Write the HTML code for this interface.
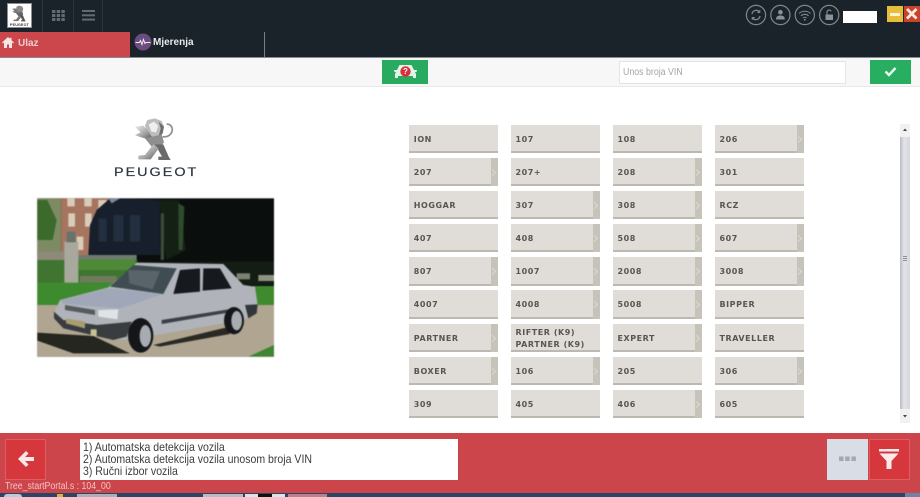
<!DOCTYPE html>
<html><head><meta charset="utf-8"><style>
*{box-sizing:border-box}
html,body{margin:0;padding:0;background:#fff}
#r{position:relative;width:920px;height:497px;overflow:hidden;background:#fff;font-family:"Liberation Sans",sans-serif;filter:blur(.25px)}
#r div,#r svg{position:absolute}
.b{width:88.5px;height:28.4px;background:#e0dcd7;border-bottom:2px solid #bdb9b1;color:#5a5552;font:bold 8px/30px "DejaVu Sans",sans-serif;letter-spacing:.55px;padding-left:4.5px;white-space:nowrap}
.a::after{content:"";position:absolute;right:0;top:0;bottom:-2px;width:7px;background:#c6c4ba}
.a::before{content:"";position:absolute;z-index:1;right:2.5px;top:12px;width:4px;height:4px;border-top:1px solid #dcdad2;border-right:1px solid #dcdad2;transform:rotate(45deg)}
.sep{width:1px;background:#2b363c}
</style></head><body><div id="r">

<div style="left:0;top:0;width:920px;height:57px;background:#1a2329"></div>
<div style="left:0;top:57px;width:920px;height:1px;background:#858b8e"></div>
<div style="left:0;top:58px;width:920px;height:28px;background:#f7f7f7"></div>
<div style="left:0;top:86px;width:920px;height:1px;background:#e9e9e9"></div>

<!-- small logo -->
<div style="left:7px;top:3px;width:25px;height:25px;background:#fff;border:1px solid #8c8f90"></div>
<svg style="left:10px;top:5px" width="19" height="17" viewBox="130 35 125 135">
<path d="M165 62L172 45L195 40L215 48L222 65L218 85L205 98L190 100L175 85Z" fill="#8a8a8a"/>
<path d="M135 65L160 62L172 74L186 96L172 102L150 96L135 90L152 82Z" fill="#777"/>
<path d="M165 100L215 88L222 112L205 132L185 125Z" fill="#666"/>
<path d="M195 118L220 118L236 155L242 165L205 165L205 155L216 155Z" fill="#555"/>
<path d="M190 118L206 130L182 163L145 163L145 152L165 150Z" fill="#777"/>
</svg>
<div style="left:8px;top:22.5px;width:23px;text-align:center;font-size:3.6px;line-height:4px;font-weight:bold;color:#333;letter-spacing:.2px">PEUGEOT</div>
<div class="sep" style="left:42px;top:0;height:32px"></div>
<div class="sep" style="left:73px;top:0;height:32px"></div>
<div class="sep" style="left:102px;top:0;height:32px"></div>
<svg style="left:52px;top:10px" width="13" height="11" viewBox="0 0 13 11" fill="#626b70"><rect width="3.4" height="3"/><rect x="4.7" width="3.4" height="3"/><rect x="9.4" width="3.4" height="3"/><rect y="4" width="3.4" height="3"/><rect x="4.7" y="4" width="3.4" height="3"/><rect x="9.4" y="4" width="3.4" height="3"/><rect y="8" width="3.4" height="3"/><rect x="4.7" y="8" width="3.4" height="3"/><rect x="9.4" y="8" width="3.4" height="3"/></svg>
<svg style="left:82px;top:10px" width="13" height="11" viewBox="0 0 13 11" fill="#626b70"><rect width="13" height="2"/><rect y="4.3" width="13" height="2"/><rect y="8.6" width="13" height="2"/></svg>

<!-- tabs -->
<div style="left:0;top:32px;width:130px;height:25px;background:#cc474c"></div>
<svg style="left:2px;top:37px" width="12" height="11" viewBox="0 0 12 11"><path d="M6 0L0 5.5l.8.9L2 5.4V11h3V7.5h2V11h3V5.4l1.2 1 .8-.9L9.5 3.2V.8H8v1z" fill="#f5e6e6"/></svg>
<div style="left:18px;top:37.5px;font-size:10px;line-height:12px;font-weight:bold;color:#eecfd0">Ulaz</div>
<svg style="left:134px;top:33px" width="18" height="18" viewBox="0 0 18 18"><circle cx="9" cy="9" r="8.5" fill="#6c4b80"/><path d="M1.5 9.5h4l1-2 1.5 4 1.5-5 1.5 4 .8-1h4.7" stroke="#eee" fill="none" stroke-width="1"/></svg>
<div style="left:153px;top:36.5px;font-size:10px;line-height:12px;font-weight:bold;color:#e8eaeb">Mjerenja</div>
<div style="left:264px;top:32px;width:1px;height:25px;background:#77807f"></div>

<!-- status icons -->
<svg style="left:744px;top:4px" width="100" height="22" viewBox="0 0 100 22" fill="none" stroke="#7f878b" stroke-width="1.2">
<circle cx="12" cy="11" r="9.6"/><circle cx="36.4" cy="11" r="9.6"/><circle cx="60.8" cy="11" r="9.6"/><circle cx="85.2" cy="11" r="9.6"/>
<path d="M8 10a4.2 4.2 0 0 1 7.5-2M16 12a4.2 4.2 0 0 1-7.5 2" stroke-width="1.3"/><path d="M15.8 6v2.5h-2.5M8.2 16v-2.5h2.5" stroke-width="1"/>
<circle cx="36.4" cy="8.2" r="2.3" fill="#8b9296" stroke="none"/><path d="M32 15.5c0-3 1.8-4 4.4-4s4.4 1 4.4 4z" fill="#8b9296" stroke="none"/>
<path d="M55 9.5c3.3-3 8.3-3 11.6 0M57 11.8c2.2-2 5.4-2 7.6 0M59 14c1-.9 2.6-.9 3.6 0" stroke-width="1.1"/><circle cx="60.8" cy="15.8" r=".9" fill="#8b9296" stroke="none"/>
<rect x="81.5" y="10.5" width="7.5" height="5.5" fill="#8b9296" stroke="none"/><path d="M83 10.5V8a2.2 2.2 0 0 1 4.2-.6"/>
</svg>
<div style="left:842.5px;top:10.5px;width:34.5px;height:12px;background:#fff"></div>
<div style="left:887px;top:6px;width:15.5px;height:15.5px;background:#e8bd3a"></div>
<div style="left:890px;top:12.5px;width:10px;height:3px;background:#fbf3d6"></div>
<div style="left:904px;top:6px;width:16px;height:15.5px;background:#c9432a"></div>
<svg style="left:904px;top:6px" width="16" height="16" viewBox="0 0 16 16"><path d="M3 3l9.5 9.5M12.5 3L3 12.5" stroke="#fbe9e2" stroke-width="2.8"/></svg>

<!-- toolbar -->
<div style="left:382px;top:59.5px;width:46px;height:24.5px;background:#28ab61"></div>
<svg style="left:392px;top:62px" width="27" height="20" viewBox="0 0 27 20"><path d="M2 8h3l2.500-5h12L22 8h3l-.5 2H23l1 2v4h-3v-2H6v2H3v-4l1-2H2.500z" fill="#e4f3ea"/><circle cx="13.5" cy="9.5" r="5.2" fill="#d8303a"/></svg>
<div style="left:395.5px;top:66.5px;width:20px;text-align:center;font-size:8px;line-height:10px;font-weight:bold;color:#fff">?</div>
<div style="left:619px;top:60.5px;width:227px;height:23px;background:#fff;border:1px solid #e4e4e4"></div>
<div style="left:623px;top:61.5px;font-size:10px;line-height:21px;color:#a5a5a5;transform:scaleX(.88);transform-origin:0 0;white-space:nowrap">Unos broja VIN</div>
<div style="left:870px;top:60px;width:40.5px;height:23.5px;background:#27ae60"></div>
<svg style="left:884px;top:66px" width="13" height="11" viewBox="0 0 13 11"><path d="M1.5 5.5L5 9l6.5-7" stroke="#eef8f2" stroke-width="2.4" fill="none"/></svg>

<!-- lion logo -->
<svg style="left:90px;top:105px" width="130" height="60" viewBox="0 0 390 180">
<defs><linearGradient id="g" x1="0" y1="0" x2="1" y2="1"><stop offset="0" stop-color="#ececec"/><stop offset=".55" stop-color="#a8a8a8"/><stop offset="1" stop-color="#5c5c5c"/></linearGradient></defs>
<path d="M218 95C238 98 250 82 246 68C243 60 236 56 230 58" stroke="#8e8e8e" stroke-width="5" fill="none"/>
<path d="M165 62L172 45L195 40L215 48L222 65L218 85L205 98L190 100L175 85Z" fill="#bdbdbd"/>
<path d="M176 58L192 50L205 62L198 82L184 80Z" fill="#efefef"/>
<path d="M206 50L222 65L218 85L205 98L212 70Z" fill="#6f6f6f"/>
<path d="M135 65L160 62L172 74L186 96L172 102L150 96L135 90L152 82Z" fill="url(#g)"/>
<path d="M165 100L215 88L222 112L205 132L185 125Z" fill="#8f8f8f"/>
<path d="M195 118L220 118L236 155L242 165L205 165L205 155L216 155Z" fill="#6a6a6a"/>
<path d="M190 118L206 130L182 163L145 163L145 152L165 150Z" fill="url(#g)"/>
</svg>
<div style="left:114px;top:165.5px;font-size:11.5px;line-height:14px;color:#2c3644;letter-spacing:1.6px;transform:scaleX(1.25);transform-origin:0 0;white-space:nowrap;-webkit-text-stroke:.2px #2c3644">PEUGEOT</div>

<!-- car photo -->
<svg style="left:30px;top:190px;filter:blur(.6px)" width="250" height="175" viewBox="0 0 750 525">
<rect x="22" y="25" width="710" height="475" fill="#0a0e0d"/>
<rect x="22" y="25" width="72" height="175" fill="#7e8a63"/>
<path d="M22 30L52 30L80 90L68 150L22 150Z" fill="#3c6a2b"/>
<rect x="94" y="25" width="146" height="170" fill="#a67560"/>
<path d="M112 25h22v24h-22zM163 25h22v24h-22zM205 30h25v26h-25zM115 70h20v40h-20zM165 70h20v40h-20zM140 140h20v40h-20z" fill="#d8cdb9"/>
<path d="M240 25L200 60L180 105L175 195L390 195L390 30Z" fill="#161f2b"/>
<path d="M235 25h35l-25 15z" fill="#7d8a98"/>
<path d="M250 75h30v80h-30zM300 75h30v80h-30zM205 85h25v70h-25z" fill="#232f3f"/>
<path d="M388 30h60l20 150-60 30z" fill="#142014"/>
<path d="M392 70l10 0 0 140-10 0z" fill="#3d4a3a"/>
<path d="M445 40l18 10-5 130-12 0z" fill="#2f4a2d"/>
<rect x="22" y="185" width="125" height="28" fill="#8e8a78"/>
<rect x="145" y="195" width="175" height="15" fill="#6f7a70"/>
<rect x="22" y="210" width="300" height="70" fill="#3f7530"/>
<rect x="145" y="208" width="170" height="32" fill="#4d8936"/>
<rect x="320" y="215" width="412" height="70" fill="#141d14"/>
<rect x="150" y="258" width="110" height="20" fill="#707b5d"/>
<rect x="685" y="255" width="47" height="18" fill="#8e9480"/>
<rect x="620" y="250" width="40" height="18" fill="#7b8270"/>
<rect x="103" y="155" width="42" height="125" fill="#a8a99c"/>
<rect x="110" y="125" width="26" height="32" fill="#68716b"/>
<rect x="22" y="278" width="240" height="70" fill="#3e8b2f"/>
<rect x="670" y="288" width="62" height="85" fill="#3f8a2e"/>
<rect x="22" y="345" width="710" height="155" fill="#afa591"/>
<path d="M655 500L732 465V500Z" fill="#3f8430"/>
<path d="M22 428L190 438L300 490L130 490L22 452Z" fill="#25261f"/>
<path d="M370 465L590 412L600 432L390 470Z" fill="#2a2a24"/>
<!-- car body -->
<path d="M72 368L90 330L235 292L320 218L580 222L640 285L675 290L683 345L650 385L610 395L395 432L300 447L250 450L100 415L72 385Z" fill="#b0b4ba"/>
<path d="M90 332L235 295L400 312L270 356L200 350L105 342Z" fill="#a0a7b8"/>
<path d="M240 290L310 225L440 235L400 312Z" fill="#3f4c52"/>
<path d="M295 240L390 243L368 298L298 280Z" fill="#59646a"/>
<path d="M430 312L450 240L510 235L510 305Z" fill="#161a1e"/>
<path d="M518 302L520 235L570 235L605 295Z" fill="#161a1e"/>
<path d="M72 365L100 390L200 405L305 395L290 440L250 450L100 415L72 385Z" fill="#3a3d40"/>
<path d="M105 345L195 360L195 375L105 360Z" fill="#565b60"/>
<path d="M205 360L265 358L262 388L205 380Z" fill="#dfe3e6"/>
<path d="M108 385L165 395L165 415L108 400Z" fill="#a89c70"/>
<path d="M395 390L595 358L595 368L395 402Z" fill="#3b4046"/>
<path d="M645 345L683 343L680 370L655 385Z" fill="#32353a"/>
<ellipse cx="332" cy="436" rx="38" ry="52" fill="#14161a"/>
<ellipse cx="346" cy="438" rx="17" ry="33" fill="#a7acb2"/>
<ellipse cx="612" cy="392" rx="30" ry="41" fill="#14161a"/>
<ellipse cx="620" cy="392" rx="16" ry="29" fill="#a7acb2"/>
<path d="M182 418h18v20h-18z" fill="#c9c195"/>
</svg>

<!-- model grid -->
<div class="b" style="left:409.3px;top:124.5px">ION</div>
<div class="b" style="left:511px;top:124.5px">107</div>
<div class="b" style="left:613px;top:124.5px">108</div>
<div class="b a" style="left:715px;top:124.5px">206</div>
<div class="b a" style="left:409.3px;top:157.7px">207</div>
<div class="b" style="left:511px;top:157.7px">207+</div>
<div class="b a" style="left:613px;top:157.7px">208</div>
<div class="b" style="left:715px;top:157.7px">301</div>
<div class="b" style="left:409.3px;top:190.9px">HOGGAR</div>
<div class="b a" style="left:511px;top:190.9px">307</div>
<div class="b a" style="left:613px;top:190.9px">308</div>
<div class="b" style="left:715px;top:190.9px">RCZ</div>
<div class="b" style="left:409.3px;top:224px">407</div>
<div class="b a" style="left:511px;top:224px">408</div>
<div class="b a" style="left:613px;top:224px">508</div>
<div class="b a" style="left:715px;top:224px">607</div>
<div class="b a" style="left:409.3px;top:257.2px">807</div>
<div class="b a" style="left:511px;top:257.2px">1007</div>
<div class="b a" style="left:613px;top:257.2px">2008</div>
<div class="b a" style="left:715px;top:257.2px">3008</div>
<div class="b" style="left:409.3px;top:290.4px">4007</div>
<div class="b a" style="left:511px;top:290.4px">4008</div>
<div class="b a" style="left:613px;top:290.4px">5008</div>
<div class="b" style="left:715px;top:290.4px">BIPPER</div>
<div class="b a" style="left:409.3px;top:323.6px">PARTNER</div>
<div class="b" style="left:511px;top:323.6px;line-height:11.5px;padding-top:3.5px">RIFTER (K9)<br>PARTNER (K9)</div>
<div class="b a" style="left:613px;top:323.6px">EXPERT</div>
<div class="b" style="left:715px;top:323.6px">TRAVELLER</div>
<div class="b a" style="left:409.3px;top:356.8px">BOXER</div>
<div class="b a" style="left:511px;top:356.8px">106</div>
<div class="b" style="left:613px;top:356.8px">205</div>
<div class="b a" style="left:715px;top:356.8px">306</div>
<div class="b" style="left:409.3px;top:390px">309</div>
<div class="b" style="left:511px;top:390px">405</div>
<div class="b a" style="left:613px;top:390px">406</div>
<div class="b" style="left:715px;top:390px">605</div>

<!-- scrollbar -->
<div style="left:900px;top:124px;width:10px;height:299px;background:#f1f1f1"></div>
<div style="left:900px;top:137px;width:10px;height:272px;background:linear-gradient(90deg,#b9bbc2,#e3e4e8 40%,#d6d7dc)"></div>
<svg style="left:900px;top:124px" width="10" height="299" viewBox="0 0 10 299"><path d="M3 7l2-2.5L7 7z" fill="#444"/><path d="M3 291l2 2.5 2-2.5z" fill="#444"/><path d="M3 132.5h4M3 134.5h4M3 136.5h4" stroke="#777" stroke-width=".7"/></svg>

<!-- footer -->
<div style="left:0;top:433px;width:920px;height:60px;background:#cc454a"></div>
<div style="left:5px;top:439px;width:41px;height:40.5px;background:#d6373d;border:1px solid #e05c60"></div>
<svg style="left:16px;top:449px" width="20" height="20" viewBox="0 0 20 20"><path d="M10 2L2 10l8 8 2.5-2.5L9 12h9V8H9l3.5-3.5z" fill="#fbe9e9"/></svg>
<div style="left:80px;top:439px;width:378px;height:40.5px;background:#fff"></div>
<div style="left:83px;top:440.5px;font-size:12px;line-height:12px;color:#3c3c3c;white-space:nowrap;transform:scaleX(.878);transform-origin:0 0">1) Automatska detekcija vozila<br>2) Automatska detekcija vozila unosom broja VIN<br>3) Ručni izbor vozila</div>
<div style="left:827px;top:439px;width:41px;height:40.5px;background:#d9dde5"></div>
<svg style="left:839px;top:456px" width="17" height="6" viewBox="0 0 17 6" fill="#a3a8b2"><rect width="4.5" height="4.5" y=".5"/><rect x="6.2" y=".5" width="4.5" height="4.5"/><rect x="12.4" y=".5" width="4.5" height="4.5"/></svg>
<div style="left:869px;top:439px;width:41px;height:40.5px;background:#d6373d;border:1px solid #e05c60"></div>
<svg style="left:878px;top:448px" width="22" height="22" viewBox="0 0 22 22" fill="#fbeaea"><rect x="1" y="1" width="20" height="2.5"/><path d="M1.5 5.5h19L13.5 13v8h-5v-8z"/></svg>
<div style="left:5px;top:481px;font-size:10px;line-height:12px;color:#f0c4c5;white-space:nowrap;transform:scaleX(.875);transform-origin:0 0">Tree_startPortal.s : 104_00</div>

<!-- taskbar -->
<div style="left:0;top:493px;width:920px;height:4px;background:#2b4566"></div>
<div style="left:4px;top:494px;width:18px;height:3px;background:#b9cbd8;border-radius:9px 9px 0 0"></div>
<div style="left:57px;top:494px;width:6px;height:3px;background:#d9b441"></div>
<div style="left:77px;top:494px;width:40px;height:3px;background:#a8b0bb"></div>
<div style="left:203px;top:494px;width:40px;height:3px;background:#b6bcc2"></div>
<div style="left:245px;top:494px;width:40px;height:3px;background:#dfe2e4"></div>
<div style="left:258px;top:494px;width:14px;height:3px;background:#111"></div>
<div style="left:288px;top:494px;width:39px;height:3px;background:#b7818d"></div>
<div style="left:905px;top:493px;width:15px;height:4px;background:#6d84a5"></div>
</div></body></html>
